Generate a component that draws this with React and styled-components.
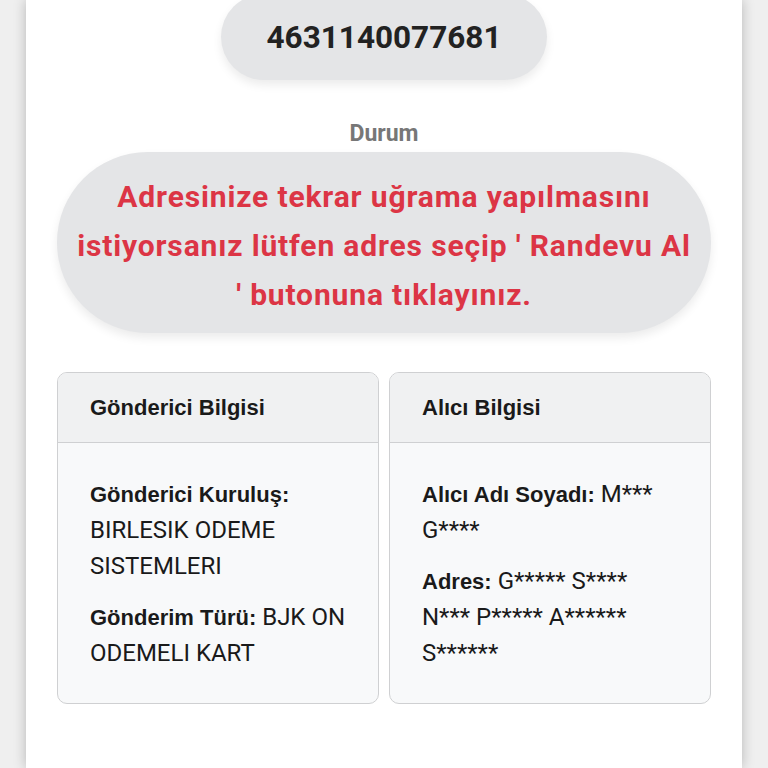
import React from "react";
import styled, { createGlobalStyle } from "styled-components";

const GlobalStyle = createGlobalStyle`
  html, body {
    margin: 0;
    padding: 0;
    background: #efefef;
    font-family: Roboto, "Noto Sans", "Liberation Sans", sans-serif;
    color: #212529;
    overflow: hidden;
  }
`;

const Page = styled.div`
  height: 768px;
  padding: 0 26px;
  box-sizing: border-box;
`;

const Sheet = styled.div`
  height: 100%;
  background: #fff;
  box-shadow: 0 0 12px rgba(0, 0, 0, 0.24);
  padding: 0 31px;
  box-sizing: border-box;
  display: flex;
  flex-direction: column;
  align-items: center;
`;

const NumberPill = styled.div`
  margin-top: -6px;
  height: 86px;
  padding: 0 46px;
  display: flex;
  align-items: center;
  background: #e4e5e7;
  border-radius: 44px;
  box-shadow: 0 5px 10px rgba(0, 0, 0, 0.08);
  font-size: 31.5px;
  font-weight: 700;
  color: #222;
`;

const Label = styled.div`
  margin-top: 40px;
  font-size: 23px;
  font-weight: 700;
  color: #777;
  line-height: 28px;
`;

const StatusPill = styled.div`
  margin-top: 4px;
  align-self: stretch;
  background: #e4e5e7;
  border-radius: 91px;
  padding: 20px 18px 14px;
  box-shadow: 0 5px 10px rgba(0, 0, 0, 0.08);
  text-align: center;
  font-size: 30px;
  letter-spacing: 0.85px;
  line-height: 49px;
  font-weight: 700;
  color: #dc3545;
`;

const Cards = styled.div`
  margin-top: 39px;
  align-self: stretch;
  display: grid;
  grid-template-columns: 1fr 1fr;
  gap: 10px;
`;

const Card = styled.div`
  border: 1px solid #cfd0d2;
  border-radius: 10px;
  background: #f8f9fa;
  overflow: hidden;
  display: flex;
  flex-direction: column;
`;

const CardHeader = styled.div`
  height: 69px;
  display: flex;
  align-items: center;
  padding: 0 32px;
  background: #f0f1f2;
  border-bottom: 1px solid #cfd0d2;
  font-family: "Liberation Sans", Arial, sans-serif;
  font-size: 22px;
  font-weight: 700;
  color: #1a1a1a;
`;

const CardBody = styled.div`
  padding: 33px 32px 32px;
  font-size: 24px;
  line-height: 36px;
  color: #1a1a1a;
`;

const Field = styled.p`
  margin: 0 0 15px;
  &:last-child {
    margin-bottom: 0;
  }
  b {
    font-family: "Liberation Sans", Arial, sans-serif;
    font-weight: 700;
    font-size: 22px;
    line-height: 1;
  }
`;

const InfoCard = ({ title, fields }) => (
  <Card>
    <CardHeader>{title}</CardHeader>
    <CardBody>
      {fields.map((f) => (
        <Field key={f.label}>
          <b>{f.label}</b>
          {f.breakAfter ? <br /> : " "}
          {f.value}
        </Field>
      ))}
    </CardBody>
  </Card>
);

const sender = [
  { label: "Gönderici Kuruluş:", value: "BIRLESIK ODEME SISTEMLERI", breakAfter: true },
  { label: "Gönderim Türü:", value: "BJK ON ODEMELI KART" },
];

const receiver = [
  { label: "Alıcı Adı Soyadı:", value: "M*** G****" },
  { label: "Adres:", value: "G***** S**** N*** P***** A****** S******" },
];

export default function App() {
  return (
    <>
      <GlobalStyle />
      <Page>
        <Sheet>
          <NumberPill>4631140077681</NumberPill>
          <Label>Durum</Label>
          <StatusPill>
            Adresinize tekrar uğrama yapılmasını istiyorsanız lütfen adres
            seçip ' Randevu Al ' butonuna tıklayınız.
          </StatusPill>
          <Cards>
            <InfoCard title="Gönderici Bilgisi" fields={sender} />
            <InfoCard title="Alıcı Bilgisi" fields={receiver} />
          </Cards>
        </Sheet>
      </Page>
    </>
  );
}
